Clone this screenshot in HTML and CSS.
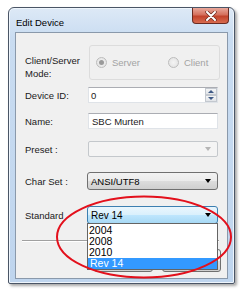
FILE: index.html
```html
<!DOCTYPE html>
<html lang="en">
<head>
    <meta charset="UTF-8">
    <meta name="viewport" content="width=device-width, initial-scale=1.0">
    <title>Edit Device</title>
    <link rel="stylesheet" href="styles.css">
</head>
<body>
    <div class="window">
        <div class="titlebar">
            <span class="title">Edit Device</span>
            <div class="close-btn">
                <svg width="14" height="10" viewBox="0 0 14 10">
                    <path d="M3 1 L11 9 M11 1 L3 9" stroke="#6b2a20" stroke-width="3.4" stroke-linecap="round"/>
                    <path d="M3 1 L11 9 M11 1 L3 9" stroke="#ffffff" stroke-width="2" stroke-linecap="round"/>
                </svg>
            </div>
        </div>
        <div class="client">
            <div class="form">
                <div class="row row-mode">
                    <label class="lbl lbl-two">Client/Server<br>Mode:</label>
                    <div class="groupbox">
                        <span class="radio checked"></span><span class="radio-text">Server</span>
                        <span class="radio radio-client"></span><span class="radio-text">Client</span>
                    </div>
                </div>
                <div class="row row-id">
                    <label class="lbl">Device ID:</label>
                    <div class="textbox">
                        <span class="value">0</span>
                        <div class="spinner">
                            <span class="spin-btn"><i class="tri-up"></i></span>
                            <span class="spin-btn"><i class="tri-down"></i></span>
                        </div>
                    </div>
                </div>
                <div class="row row-name">
                    <label class="lbl">Name:</label>
                    <div class="textbox"><span class="value">SBC Murten</span></div>
                </div>
                <div class="row row-preset">
                    <label class="lbl">Preset :</label>
                    <div class="combo combo-disabled"><span class="value"></span><i class="arrow"></i></div>
                </div>
                <div class="row row-charset">
                    <label class="lbl">Char Set :</label>
                    <div class="combo"><span class="value">ANSI/UTF8</span><i class="arrow"></i></div>
                </div>
                <div class="row row-standard">
                    <label class="lbl">Standard</label>
                    <div class="combo combo-open"><span class="value">Rev 14</span><i class="arrow"></i></div>
                </div>
            </div>
            <div class="separator"></div>
            <!-- OK / Cancel sit under the open drop-down, only their edges show -->
            <div class="buttons">
                <button class="btn" aria-label="OK"></button>
                <button class="btn" aria-label="Cancel"></button>
            </div>
        </div>
    </div>

    <ul class="droplist">
        <li>2004</li>
        <li>2008</li>
        <li>2010</li>
        <li class="selected">Rev 14</li>
    </ul>

    <svg class="mark" width="243" height="293" viewBox="0 0 243 293">
        <ellipse cx="144" cy="237" rx="87" ry="40.5" fill="none" stroke="#e3101c" stroke-width="2"/>
    </svg>
</body>
</html>
```

FILE: styles.css
```css
body {
    margin: 0;
    width: 243px;
    height: 293px;
    background: #ffffff;
    font-family: "Liberation Sans", Arial, sans-serif;
    font-size: 9.5px;
    color: #1a1a1a;
    position: relative;
    overflow: hidden;
}
.window {
    margin: 7px 0 0 8px;
    width: 227px;
    height: 277px;
    box-sizing: border-box;
    border: 1px solid #4a5566;
    border-radius: 6px 6px 2px 2px;
    background: linear-gradient(#dde9f6, #c9dcf1 30px, #bfd5ee);
    box-shadow: 2px 2px 3px rgba(0,0,0,0.35), inset 0 0 0 1px #eef5fc;
}
.titlebar {
    height: 24px;
    display: flex;
    justify-content: space-between;
    align-items: flex-start;
    padding: 0 5px 0 7px;
}
.title {
    margin-top: 9px;
    font-size: 9.5px;
    color: #000;
}
.close-btn {
    width: 37px;
    height: 16px;
    box-sizing: border-box;
    border: 1px solid #6a2b22;
    border-top: none;
    border-radius: 0 0 4px 4px;
    background: linear-gradient(#e9a99c, #d5705d 45%, #c2432c 55%, #d86b4f);
    display: flex;
    align-items: center;
    justify-content: center;
}
.client {
    margin: 0 6px;
    height: 247px;
    box-sizing: border-box;
    border: 1px solid #8a99ab;
    background: #f0f0f0;
}
.form {
    padding: 0 0 0 9px;
}
.row {
    display: flex;
    align-items: center;
}
.lbl {
    width: 63px;
    flex: none;
}
.lbl-two {
    align-self: flex-start;
    margin-top: 9px;
    line-height: 13px;
}
.row-mode {
    margin-top: 12px;
    height: 35px;
}
.row-id {
    margin-top: 7px;
}
.row-name {
    margin-top: 10px;
}
.row-preset {
    margin-top: 12px;
}
.row-charset {
    margin-top: 15px;
}
.row-standard {
    margin-top: 16px;
}
.groupbox {
    margin-left: 1px;
    width: 131px;
    height: 35px;
    box-sizing: border-box;
    border: 1px solid #dcdcdc;
    border-radius: 3px;
    display: flex;
    align-items: center;
    padding-left: 6px;
    color: #a3a3a3;
}
.radio {
    width: 9px;
    height: 9px;
    border-radius: 50%;
    border: 1px solid #bcbcbc;
    background: radial-gradient(#f4f4f4, #e0e0e0);
    position: relative;
    margin-right: 5px;
}
.radio.checked::after {
    content: "";
    position: absolute;
    left: 2px;
    top: 2px;
    width: 5px;
    height: 5px;
    border-radius: 50%;
    background: #9a9a9a;
}
.radio-client {
    margin-left: 28px;
}
.textbox {
    width: 130px;
    height: 16px;
    box-sizing: border-box;
    border: 1px solid #dfe3e8;
    border-top-color: #abadb3;
    background: #ffffff;
    display: flex;
    align-items: center;
    padding-left: 2px;
    position: relative;
}
.row-name .value {
    margin-left: 1px;
}
.spinner {
    position: absolute;
    right: 0;
    top: 0;
    width: 12px;
    height: 14px;
    display: flex;
    flex-direction: column;
}
.spin-btn {
    flex: 1;
    border: 1px solid #c3c8cf;
    background: linear-gradient(#f4f5f6, #e1e4e8);
    display: flex;
    align-items: center;
    justify-content: center;
}
.tri-up {
    border-left: 3px solid transparent;
    border-right: 3px solid transparent;
    border-bottom: 3px solid #3f5a86;
}
.tri-down {
    border-left: 3px solid transparent;
    border-right: 3px solid transparent;
    border-top: 3px solid #3f5a86;
}
.combo {
    margin-left: -1px;
    width: 131px;
    height: 18px;
    box-sizing: border-box;
    border: 1px solid #707070;
    border-radius: 3px;
    background: linear-gradient(#f2f2f2 0%, #ebebeb 50%, #dddddd 51%, #cfcfcf 100%);
    display: flex;
    align-items: center;
    justify-content: space-between;
    padding: 0 6px 0 3px;
    color: #000;
}
.arrow {
    border-left: 3.5px solid transparent;
    border-right: 3.5px solid transparent;
    border-top: 4px solid #000;
}
.combo-disabled {
    margin-left: 0;
    width: 130px;
    height: 16px;
    border-color: #c4c8cc;
    border-radius: 2px;
    background: #f4f4f4;
}
.combo-disabled .arrow {
    border-top-color: #b5b5b5;
}
.combo-open {
    border-color: #3c7fb1;
    background: linear-gradient(#eaf6fd 0%, #d9f0fc 50%, #bee6fd 51%, #a7d9f5 100%);
    font-size: 10px;
}
.separator {
    margin: 16px 0 0 6px;
    width: 197px;
    height: 1px;
    background: #a0a0a0;
    border-bottom: 1px solid #ffffff;
}
.buttons {
    margin-top: 7px;
    display: flex;
    justify-content: flex-end;
    gap: 9px;
    padding-right: 6px;
}
.btn {
    width: 59px;
    height: 23px;
    border: 1px solid #707070;
    border-radius: 3px;
    background: linear-gradient(#f2f2f2 50%, #dddddd 51%, #cfcfcf);
}
.droplist {
    position: absolute;
    left: 87px;
    top: 223px;
    width: 131px;
    height: 47px;
    box-sizing: border-box;
    margin: 0;
    padding: 1px 0 0;
    list-style: none;
    border: 1px solid #646464;
    background: #ffffff;
    font-size: 10.5px;
    color: #000;
}
.droplist li {
    height: 11px;
    line-height: 11px;
    padding-left: 1px;
}
.droplist li.selected {
    background: #3399ff;
    color: #ffffff;
    padding-left: 2px;
}
.mark {
    position: absolute;
    left: 0;
    top: 0;
}
```
